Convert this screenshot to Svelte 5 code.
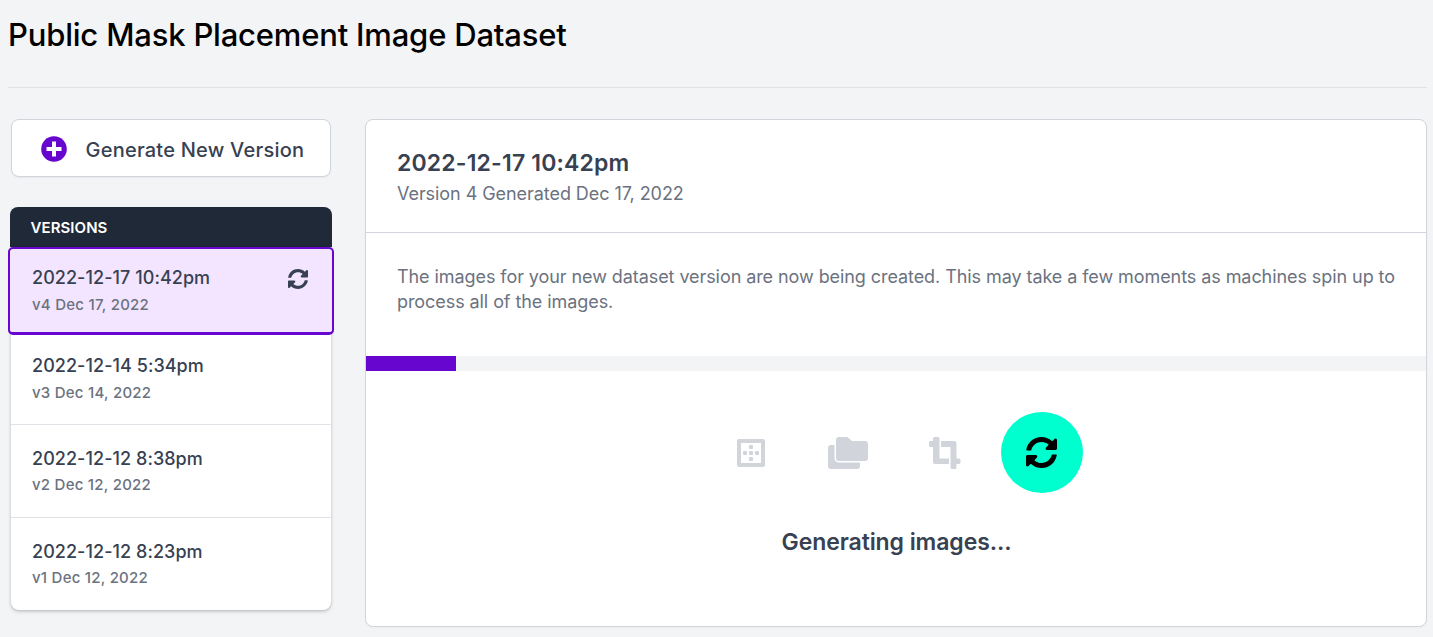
<script>
  const versions = [
    { title: '2022-12-17 10:42pm', sub: 'v4 Dec 17, 2022', active: true },
    { title: '2022-12-14 5:34pm', sub: 'v3 Dec 14, 2022' },
    { title: '2022-12-12 8:38pm', sub: 'v2 Dec 12, 2022' },
    { title: '2022-12-12 8:23pm', sub: 'v1 Dec 12, 2022' }
  ];
  const progress = 90;
</script>

{#snippet sync(size)}
  <svg width={size} height={size} viewBox="8 8 496 496" fill="currentColor" aria-hidden="true">
    <path d="M370.72 133.28C339.458 104.008 298.888 87.962 255.848 88c-77.458.068-144.328 53.178-162.791 126.85-1.344 5.363-6.122 9.15-11.651 9.15H24.103c-7.498 0-13.194-6.807-11.807-14.176C33.933 94.924 134.813 8 256 8c66.448 0 126.791 26.136 171.315 68.685L463.03 40.97C478.149 25.851 504 36.559 504 57.941V192c0 13.255-10.745 24-24 24H345.941c-21.382 0-32.09-25.851-16.971-40.971l41.75-41.749zM32 296h134.059c21.382 0 32.09 25.851 16.971 40.971l-41.75 41.75c31.262 29.273 71.835 45.319 114.876 45.28 77.418-.07 144.315-53.144 162.787-126.849 1.344-5.363 6.122-9.15 11.651-9.15h57.304c7.498 0 13.194 6.807 11.807 14.176C478.067 417.076 377.187 504 256 504c-66.448 0-126.791-26.136-171.315-68.685L48.97 471.03C33.851 486.149 8 475.441 8 454.059V320c0-13.255 10.745-24 24-24z" />
  </svg>
{/snippet}

<div class="page">
  <header><h1>Public Mask Placement Image Dataset</h1></header>
  <div class="columns">
    <aside>
      <button class="generate">
        <svg width="26" height="26" viewBox="0 0 26 26" aria-hidden="true">
          <circle cx="13" cy="13" r="12.8" fill="#6706ce" />
          <path d="M13 5.500v15M5.500 13h15" stroke="#fff" stroke-width="4" />
        </svg>
        <span>Generate New Version</span>
      </button>
      <section class="versions">
        <h2>VERSIONS</h2>
        <ul>
          {#each versions as v}
            <li class:active={v.active}>
              <div>
                <div class="name">{v.title}</div>
                <div class="sub">{v.sub}</div>
              </div>
              {#if v.active}<span class="spin">{@render sync(20)}</span>{/if}
            </li>
          {/each}
        </ul>
      </section>
    </aside>
    <main>
      <div class="head">
        <h3>2022-12-17 10:42pm</h3>
        <p>Version 4 Generated Dec 17, 2022</p>
      </div>
      <p class="message">The images for your new dataset version are now being created. This may take a few moments as machines spin up to process all of the images.</p>
      <div class="track"><div class="bar" style="width: {progress}px"></div></div>
      <div class="steps">
        <span class="step">
          <svg width="28" height="28" viewBox="0 0 28 28" fill="currentColor">
            <path fill-rule="evenodd" d="M2 0h24a2 2 0 0 1 2 2v24a2 2 0 0 1-2 2H2a2 2 0 0 1-2-2V2a2 2 0 0 1 2-2zm2 4v20h20V4z" />
            <rect x="12" y="6" width="4" height="4" rx="1" /><rect x="12" y="12" width="4" height="4" rx="1" /><rect x="12" y="18" width="4" height="4" rx="1" /><rect x="6" y="12" width="4" height="4" rx="1" /><rect x="18" y="12" width="4" height="4" rx="1" />
          </svg>
        </span>
        <span class="step">
          <svg width="40" height="32" viewBox="0 0 40 32" fill="currentColor">
            <path d="M11 0h7.5a3 3 0 0 1 2.1.9L24 4h13a3 3 0 0 1 3 3v14a3 3 0 0 1-3 3H11a3 3 0 0 1-3-3V3a3 3 0 0 1 3-3z" />
            <path d="M6.500 8H3a3 3 0 0 0-3 3v18a3 3 0 0 0 3 3h26a3 3 0 0 0 3-3v-3.500H11A4.500 4.500 0 0 1 6.500 21z" />
          </svg>
        </span>
        <span class="step">
          <svg width="32" height="32" viewBox="0 0 32 32" fill="currentColor">
            <path d="M5.500 0h3.500a1.500 1.500 0 0 1 1.500 1.500V21.500H20V27H6a2 2 0 0 1-2-2V10H1.500A1.500 1.500 0 0 1 0 8.500v-3A1.500 1.500 0 0 1 1.500 4H4V1.500A1.500 1.500 0 0 1 5.500 0z" />
            <path d="M12 4h13.500a2 2 0 0 1 2 2v15.500h2.500a1.500 1.500 0 0 1 1.500 1.500v2.500a1.500 1.500 0 0 1-1.500 1.500h-2.500v3.500a1.500 1.500 0 0 1-1.500 1.500h-3a1.500 1.500 0 0 1-1.500-1.500V10H12z" />
          </svg>
        </span>
        <span class="step current">{@render sync(31)}</span>
      </div>
      <h4>Generating images...</h4>
    </main>
  </div>
</div>

<style>
  :global(body) { background: #f3f4f6; }
  .page { box-sizing: border-box; height: 637px; padding: 0 6px 10px 8px; overflow: hidden; font-family: Inter, sans-serif; color: #374151; display: flex; flex-direction: column; }
  h1, h2, h3, h4, p, ul { margin: 0; padding: 0; }
  header { height: 87px; border-bottom: 1px solid #dfe1e5; box-sizing: content-box; flex: none; }
  h1 { font-size: 31px; line-height: 40px; font-weight: 500; color: #000; padding-top: 15px; letter-spacing: -.19px; }
  .columns { display: flex; flex: 1; padding-top: 31px; gap: 31px; }
  aside { width: 326px; flex: none; }
  .generate { box-sizing: border-box; width: 320px; height: 58px; margin: 0 0 30px 3px; padding: 2px 0 0 29px; border: 1px solid #d1d5db; border-radius: 8px; background: #fff; display: flex; align-items: center; gap: 18.500px; font: 500 20px/28px Inter, sans-serif; letter-spacing: .23px; color: #374151; box-shadow: 0 1px 2px rgb(0 0 0 / .05); }
  .generate span { padding-top: 2px; white-space: nowrap; }
  .versions h2 { box-sizing: border-box; width: 322px; height: 40px; margin-left: 2px; padding-left: 20.500px; background: #1f2937; border-radius: 8px 8px 0 0; color: #fff; font-size: 15px; line-height: 41px; font-weight: 600; letter-spacing: .07px; }
  ul { list-style: none; width: 320px; margin-left: 3px; border-radius: 0 0 8px 8px; background: #fff; box-shadow: 0 1px 3px rgb(0 0 0 / .16), 0 2px 4px rgb(0 0 0 / .1); }
  li { box-sizing: border-box; height: 93px; padding: 21px 24px 0 21px; border-bottom: 1px solid #e0e2e7; display: flex; justify-content: space-between; }
  li:nth-child(2) { height: 90px; padding-top: 18px; }
  li:nth-child(2) .sub { padding-top: 1px; }
  li:last-child { border-bottom: 0; height: 92px; }
  li.active { width: 326px; height: 88px; margin: 0 -3px; padding: 16px 24.500px 0 22px; background: #f3e5ff; border: 2px solid #6706ce; border-bottom-width: 3px; border-radius: 5px; }
  .active .sub { padding-top: 1px; }
  .name { font-size: 18px; line-height: 26px; font-weight: 500; letter-spacing: .05px; }
  .sub { font-size: 15px; line-height: 26px; font-weight: 500; color: #6b7280; letter-spacing: .24px; }
  .spin { padding-top: 3.500px; line-height: 0; }
  main { flex: 1; box-sizing: border-box; border: 1px solid #d1d5db; border-radius: 8px; background: #fff; box-shadow: 0 1px 2px rgb(0 0 0 / .03); }
  .head { height: 112px; box-sizing: content-box; border-bottom: 1px solid #d1d5db; }
  .head h3 { padding: 27px 31px 0; font-size: 23px; line-height: 32px; font-weight: 600; letter-spacing: .17px; }
  .head p { padding: 1px 31px 0; font-size: 18px; line-height: 28px; color: #6b7280; letter-spacing: -.06px; }
  .message { height: 92px; padding: 31px 30px 0 31px; font-size: 18px; line-height: 25px; color: #6b7280; letter-spacing: -.073px; }
  .track { height: 15px; background: #f3f4f6; }
  .bar { height: 100%; background: #6706ce; }
  .steps { display: flex; justify-content: center; gap: 15px; padding-top: 41px; color: #d1d5db; }
  .step { width: 82px; height: 81px; border-radius: 50%; display: flex; align-items: center; justify-content: center; }
  .current { background: #00ffce; color: #000; }
  h4 { margin-top: 33px; padding-left: 1px; text-align: center; font-size: 23px; line-height: 32px; font-weight: 600; letter-spacing: -.08px; }
</style>
